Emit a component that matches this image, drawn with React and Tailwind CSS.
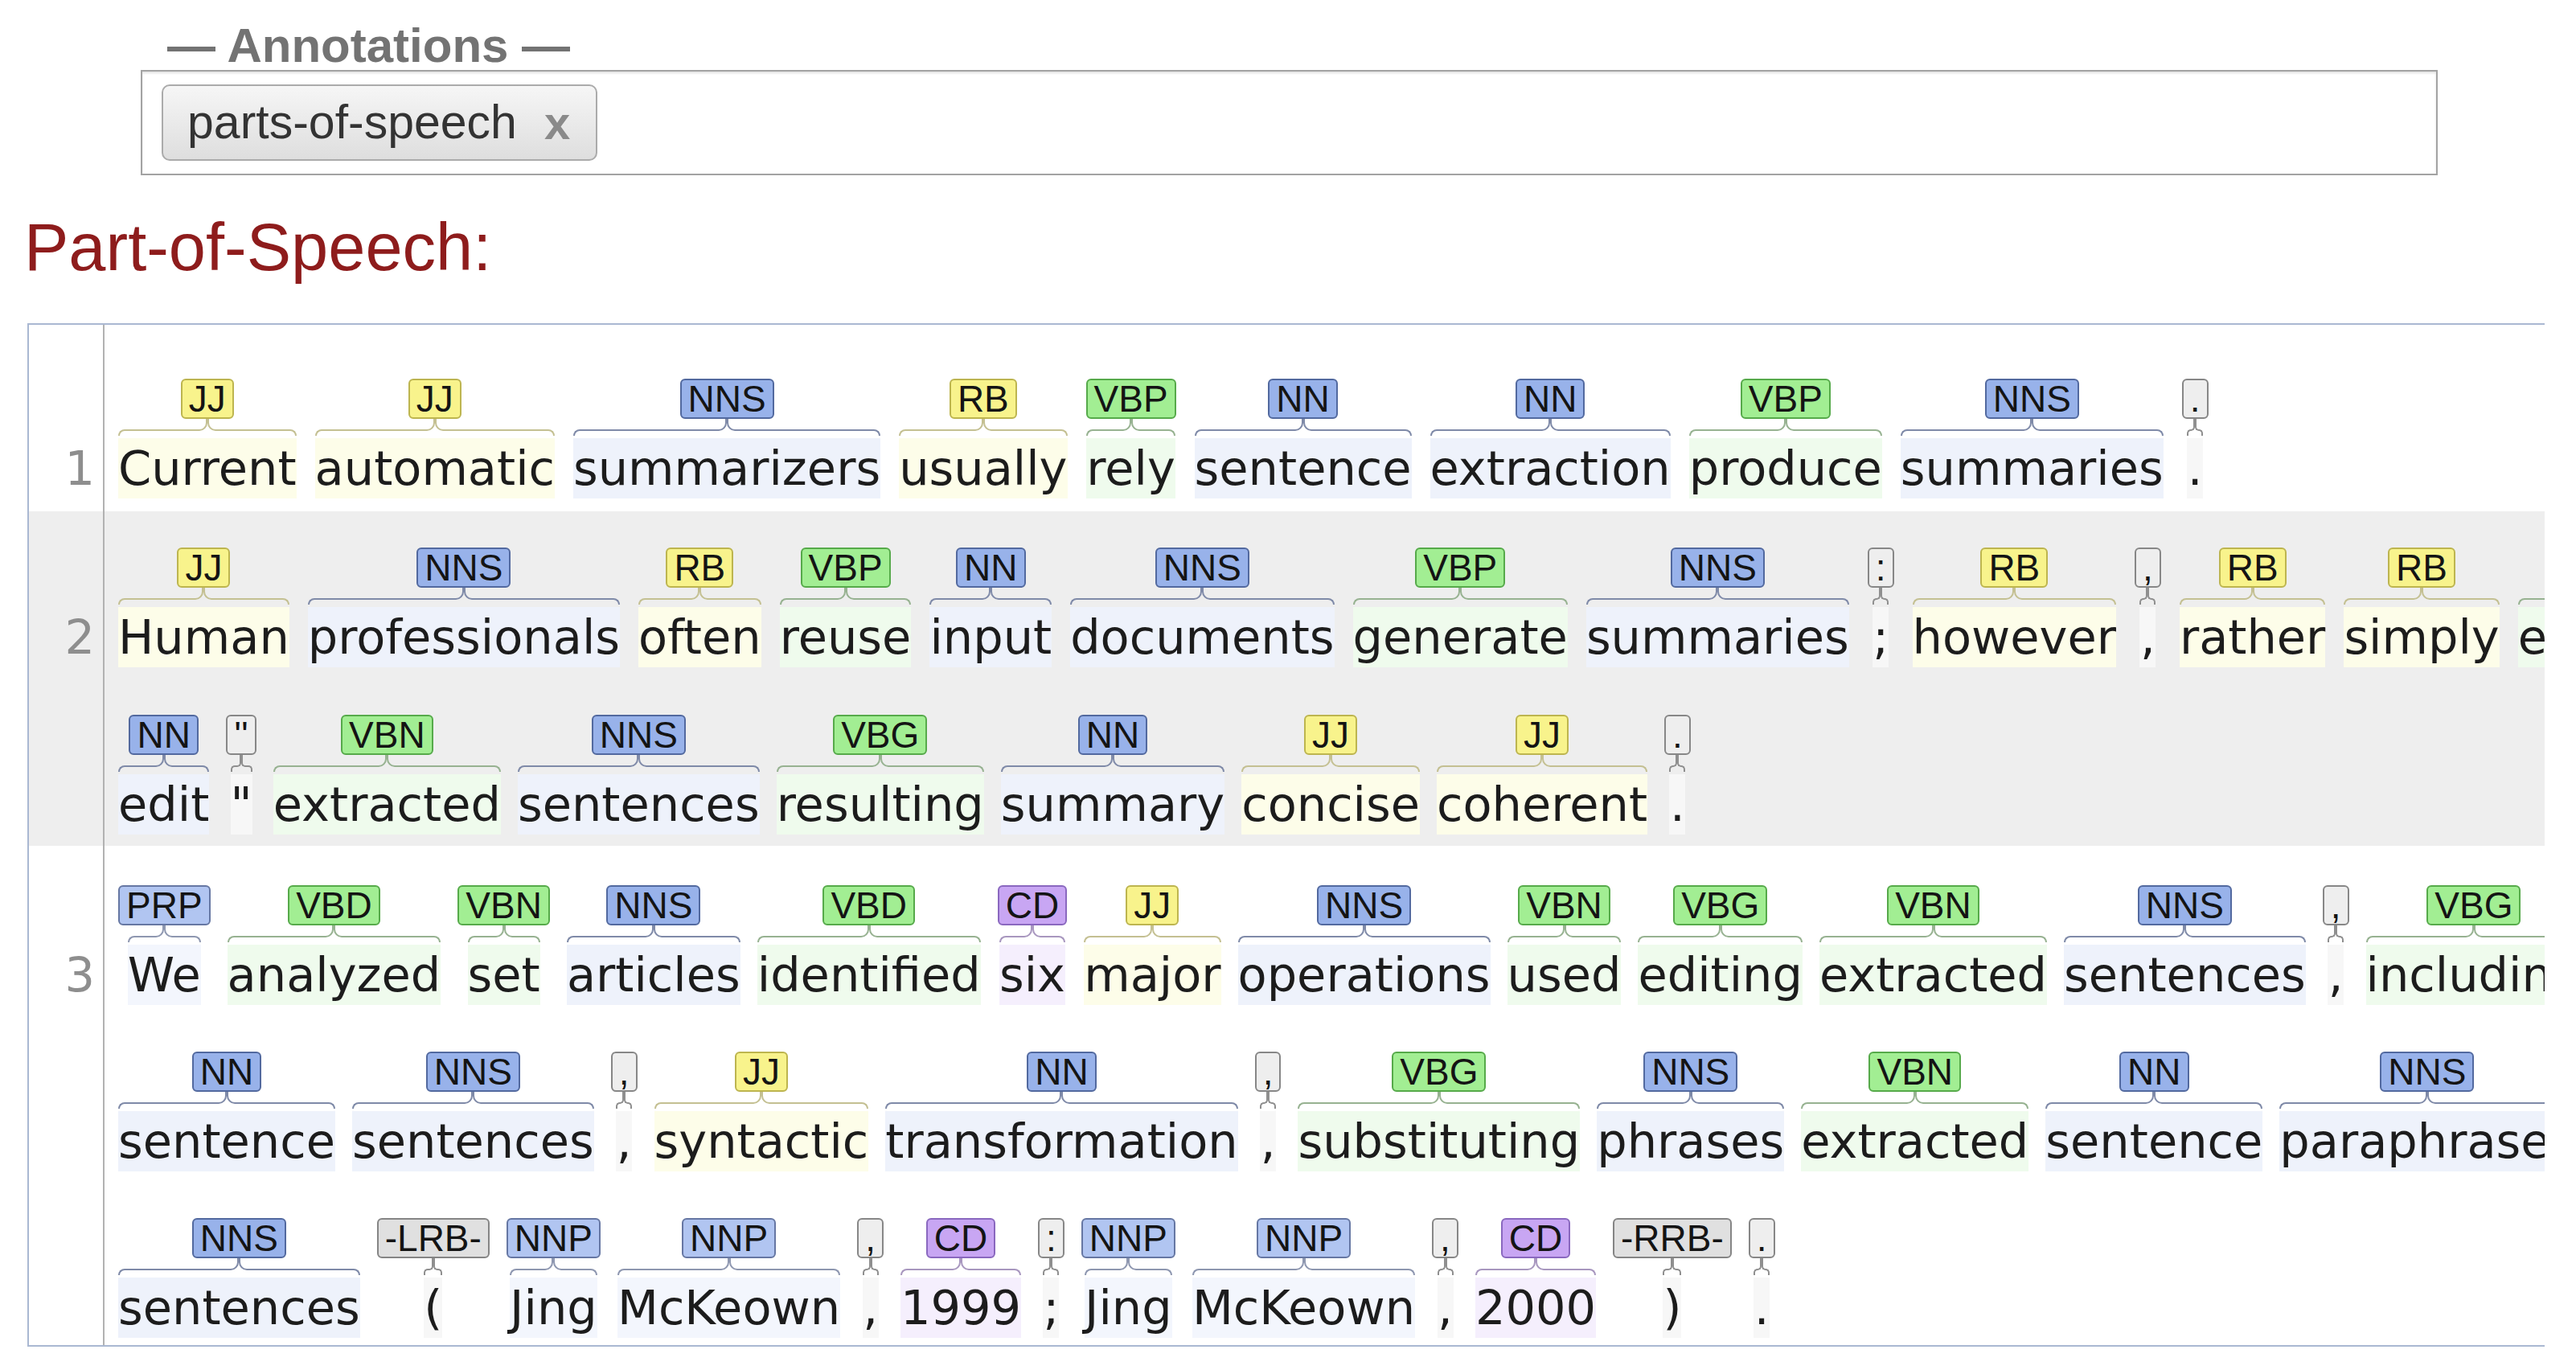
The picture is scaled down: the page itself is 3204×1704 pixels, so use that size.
import React from "react";

const KIND = {
  JJ: "y", RB: "y",
  NN: "b", NNS: "b",
  NNP: "lb", PRP: "lb",
  VBP: "g", VBN: "g", VBG: "g", VBD: "g",
  CD: "p",
  "-LRB-": "k", "-RRB-": "k",
};

const STYLES = {
  y: { chip: "bg-[#f8f38c] border-[#bdb54f]", brace: "border-[#c4c092]", word: "bg-[#fdfde9]" },
  b: { chip: "bg-[#98b2ea] border-[#52699f]", brace: "border-[#7f8aa8]", word: "bg-[#eef2fb]" },
  lb: { chip: "bg-[#b1c5f1] border-[#6677a3]", brace: "border-[#8e97b0]", word: "bg-[#f3f6fd]" },
  g: { chip: "bg-[#a2ee93] border-[#56aa4a]", brace: "border-[#97b291]", word: "bg-[#effbed]" },
  p: { chip: "bg-[#c8a6f3] border-[#8a68bf]", brace: "border-[#a897bf]", word: "bg-[#f5effd]" },
  k: { chip: "bg-[#e0e0e0] border-[#858585]", brace: "border-[#8f8f8f]", word: "bg-[#f7f7f7]" },
  q: { chip: "bg-[#eeeeee] border-[#878787]", brace: "border-[#8f8f8f]", word: "bg-[#f7f7f7]" },
};

const rows = [
  {
    n: 1,
    bg: "bg-white",
    pt: "pt-[67px]",
    pb: "pb-[16px]",
    num: "pt-[141px]",
    gaps: ["gap-[23px]"],
    lines: [
      [["Current", "JJ"], ["automatic", "JJ"], ["summarizers", "NNS"], ["usually", "RB"], ["rely", "VBP"],
       ["sentence", "NN"], ["extraction", "NN"], ["produce", "VBP"], ["summaries", "NNS"], [".", "."]],
    ],
  },
  {
    n: 2,
    bg: "bg-[#eeeeee]",
    pt: "pt-[45px]",
    pb: "pb-[14px]",
    num: "pt-[119px]",
    gaps: ["gap-[23px]", "gap-[21px]"],
    lines: [
      [["Human", "JJ"], ["professionals", "NNS"], ["often", "RB"], ["reuse", "VBP"], ["input", "NN"],
       ["documents", "NNS"], ["generate", "VBP"], ["summaries", "NNS"], [";", ":"], ["however", "RB"],
       [",", ","], ["rather", "RB"], ["simply", "RB"], ["extracting", "VBG"], ["sentences", "NNS"]],
      [["edit", "NN"], ["\"", "''"], ["extracted", "VBN"], ["sentences", "NNS"], ["resulting", "VBG"],
       ["summary", "NN"], ["concise", "JJ"], ["coherent", "JJ"], [".", "."]],
    ],
  },
  {
    n: 3,
    bg: "bg-white",
    pt: "pt-[49px]",
    pb: "pb-[9px]",
    num: "pt-[123px]",
    gaps: ["gap-[21px]", "gap-[21px]", "gap-[21px]"],
    lines: [
      [["We", "PRP"], ["analyzed", "VBD"], ["set", "VBN"], ["articles", "NNS"], ["identified", "VBD"],
       ["six", "CD"], ["major", "JJ"], ["operations", "NNS"], ["used", "VBN"], ["editing", "VBG"],
       ["extracted", "VBN"], ["sentences", "NNS"], [",", ","], ["including", "VBG"], ["removing", "VBG"]],
      [["sentence", "NN"], ["sentences", "NNS"], [",", ","], ["syntactic", "JJ"], ["transformation", "NN"],
       [",", ","], ["substituting", "VBG"], ["phrases", "NNS"], ["extracted", "VBN"], ["sentence", "NN"],
       ["paraphrases", "NNS"]],
      [["sentences", "NNS"], ["(", "-LRB-"], ["Jing", "NNP"], ["McKeown", "NNP"], [",", ","], ["1999", "CD"],
       [";", ":"], ["Jing", "NNP"], ["McKeown", "NNP"], [",", ","], ["2000", "CD"], [")", "-RRB-"], [".", "."]],
    ],
  },
];

// curly brace drawn from bordered boxes
const Brace = ({ color, small }) => {
  const cw = small ? "w-[5px]" : "w-[12px]";
  return (
    <div className="flex items-start h-[24px] w-full">
      <div className={`${cw} mt-[13px] h-[8px] border-t-2 border-l-2 rounded-tl-[8px] ${color}`} />
      <div className={`flex-1 mt-[13px] h-[2px] border-t-2 ${color}`} />
      <div className={`${cw} h-[15px] border-b-2 border-r-2 rounded-br-[10px] ${color}`} />
      <div className={`${cw} h-[15px] border-b-2 border-l-2 rounded-bl-[10px] ${color}`} />
      <div className={`flex-1 mt-[13px] h-[2px] border-t-2 ${color}`} />
      <div className={`${cw} mt-[13px] h-[8px] border-t-2 border-r-2 rounded-tr-[8px] ${color}`} />
    </div>
  );
};

const Token = ({ word, tag }) => {
  const s = STYLES[KIND[tag] || "q"];
  const small = word.length <= 1;
  return (
    <div className="flex flex-col items-center shrink-0">
      <div className={`h-[50px] px-[8px] border-2 rounded-[6px] text-[46px] leading-[46px] text-[#141414] font-['Liberation_Sans',Arial,sans-serif] ${s.chip}`}>
        {tag}
      </div>
      <div className="flex flex-col">
        <Brace color={s.brace} small={small} />
        <div className={`h-[75px] text-[59px] leading-[75px] text-[#1c1c1c] text-center ${s.word}`}>{word}</div>
      </div>
    </div>
  );
};

const App = () => {
  return (
    <div className="min-h-screen w-[3204px] bg-white overflow-hidden font-['DejaVu_Sans',sans-serif]">
      <div className="pl-[175px] pt-[27px]">
        <div className="pl-[33px] h-[60px] text-[60px] leading-[60px] font-bold text-[#737373] font-['Liberation_Sans',Arial,sans-serif]">
          — Annotations —
        </div>
        <div className="w-[2857px] h-[131px] border-2 border-[#a3a3a3] py-[16px] pl-[24px] shadow-[inset_0_2px_3px_rgba(0,0,0,0.12)]">
          <div className="inline-flex items-center h-[95px] border-2 border-[#ababab] rounded-[10px] pl-[30px] pr-[32px] gap-[34px] bg-gradient-to-b from-[#f6f6f6] to-[#dedede] font-['Liberation_Sans',Arial,sans-serif] text-[59px] leading-[91px] text-[#333]">
            <span>parts-of-speech</span>
            <span className="text-[58px] font-bold text-[#8a8a8a]">x</span>
          </div>
        </div>
      </div>

      <h2 className="mt-[48px] pl-[30px] h-[84px] text-[83px] leading-[84px] text-[#8e1c1c] font-['Liberation_Sans',Arial,sans-serif]">
        Part-of-Speech:
      </h2>

      <div className="mt-[52px] ml-[34px] w-[3131px] border-l-2 border-t-2 border-b-2 border-[#aab8d2] overflow-hidden">
        {rows.map((row) => (
          <div key={row.n} className={`flex ${row.bg}`}>
            <div
              className={`w-[94px] shrink-0 border-r-2 border-[#b2b2b2] text-right pr-[10px] text-[59px] leading-[75px] text-[#8e8e8e] ${row.num}`}
            >
              {row.n}
            </div>
            <div className="flex-1 min-w-0 pl-[17px]">
              {row.lines.map((line, i) => (
                <div key={i} className={`flex items-start whitespace-nowrap ${row.gaps[i]} ${row.pt} ${row.pb}`}>
                  {line.map(([w, t], j) => (
                    <Token key={j} word={w} tag={t} />
                  ))}
                </div>
              ))}
            </div>
          </div>
        ))}
      </div>
    </div>
  );
};

export default App;
